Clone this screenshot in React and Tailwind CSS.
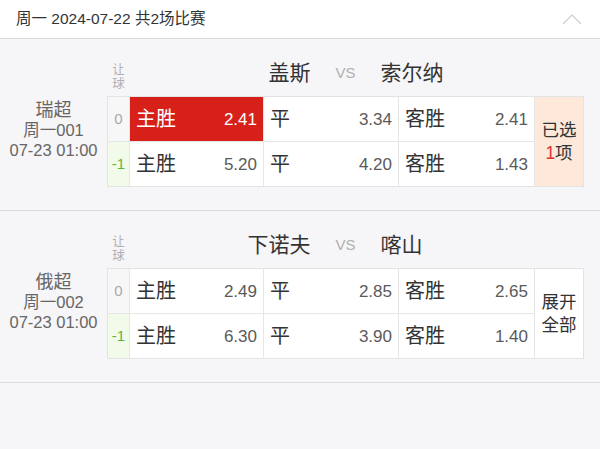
const matches = [
  {
    league: '瑞超',
    no: '周一001',
    time: '07-23 01:00',
    home: '盖斯',
    away: '索尔纳',
    rows: [
      { hc: '0', odds: ['2.41', '3.34', '2.41'] },
      { hc: '-1', odds: ['5.20', '4.20', '1.43'] },
    ],
    picked: [0, 0],
  },
  {
    league: '俄超',
    no: '周一002',
    time: '07-23 01:00',
    home: '下诺夫',
    away: '喀山',
    rows: [
      { hc: '0', odds: ['2.49', '2.85', '2.65'] },
      { hc: '-1', odds: ['6.30', '3.90', '1.40'] },
    ],
    picked: null,
  },
];

const labels = ['主胜', '平', '客胜'];

function OddsCell({ label, value, active, last }) {
  return (
    <div
      className={
        'flex items-center justify-between pl-[6px] pr-[6px] h-[44px] border-[#e6e6e6] ' +
        (last ? '' : 'border-r ') +
        (active ? 'bg-[#d8201a] text-white' : 'bg-white')
      }
    >
      <span className={'text-[20px] leading-none ' + (active ? 'text-white' : 'text-[#333]')}>{label}</span>
      <span className={'text-[17px] leading-none ' + (active ? 'text-white' : 'text-[#5a5a5a]')}>{value}</span>
    </div>
  );
}

function MatchCard({ m }) {
  return (
    <div className="flex border-b border-[#dcdcdc] pt-[11px] pb-[23px]">
      <div className="w-[107px] flex flex-col items-center pt-[50px] text-[#666] leading-[20px]">
        <span className="text-[18px]">{m.league}</span>
        <span className="text-[16.5px]">{m.no}</span>
        <span className="text-[16.5px]">{m.time}</span>
      </div>
      <div className="w-[477px] flex flex-col">
        <div className="grid grid-cols-[23px_1fr_23px] h-[46px]">
          <div className="flex flex-col items-center justify-center pt-[8px] text-[12.5px] leading-[14px] text-[#b0b0b0]">
            <span>让</span>
            <span>球</span>
          </div>
          <div className="grid grid-cols-[1fr_auto_1fr] gap-[25px] items-center">
            <span className="text-right text-[21px] text-[#333]">{m.home}</span>
            <span className="text-[15px] text-[#b0b0b0]">VS</span>
            <span className="text-[21px] text-[#333]">{m.away}</span>
          </div>
          <div />
        </div>
        <div className="flex border border-[#e3e3e3] bg-white">
          <div className="w-[22px] flex flex-col border-r border-[#e6e6e6]">
            {m.rows.map((r, i) => (
              <div
                key={i}
                className={
                  'flex items-center justify-center text-[15px] ' +
                  (i === 0 ? 'h-[45px] border-b border-[#e6e6e6] bg-[#f7f7f7] text-[#aaa]' : 'h-[44px] bg-[#f2fae9] text-[#5cb83c]')
                }
              >
                {r.hc}
              </div>
            ))}
          </div>
          <div className="w-[404px] flex flex-col">
            {m.rows.map((r, i) => (
              <div
                key={i}
                className={'grid grid-cols-[134px_135px_135px] ' + (i === 0 ? 'border-b border-[#e6e6e6]' : '')}
              >
                {r.odds.map((o, j) => (
                  <OddsCell
                    key={j}
                    label={labels[j]}
                    value={o}
                    active={m.picked && m.picked[0] === i && m.picked[1] === j}
                    last={j === 2}
                  />
                ))}
              </div>
            ))}
          </div>
          <div
            className={
              'flex-1 flex flex-col items-center justify-center border-l border-[#e6e6e6] text-[17.5px] leading-[23px] text-[#333] ' +
              (m.picked ? 'bg-[#fde8da]' : 'bg-white')
            }
          >
            {m.picked ? (
              <>
                <span>已选</span>
                <span>
                  <span className="text-[#d33]">1</span>项
                </span>
              </>
            ) : (
              <>
                <span>展开</span>
                <span>全部</span>
              </>
            )}
          </div>
        </div>
      </div>
    </div>
  );
}

export default function App() {
  return (
    <div className="w-[600px] h-[449px] overflow-hidden bg-[#f6f5f8] font-['Liberation_Sans','Noto_Sans_CJK_SC',sans-serif]">
      <div className="h-[39px] bg-white border-b border-[#d9d9d9] flex items-center justify-between pl-[16px] pr-[18px]">
        <span className="text-[15.5px] text-[#333]">周一 2024-07-22 共2场比赛</span>
        <svg width="20" height="12" viewBox="0 0 20 12" fill="none">
          <polyline points="1,11 10,2 19,11" stroke="#d0d0d0" strokeWidth="1.3" />
        </svg>
      </div>
      {matches.map((m, i) => (
        <MatchCard key={i} m={m} />
      ))}
    </div>
  );
}
